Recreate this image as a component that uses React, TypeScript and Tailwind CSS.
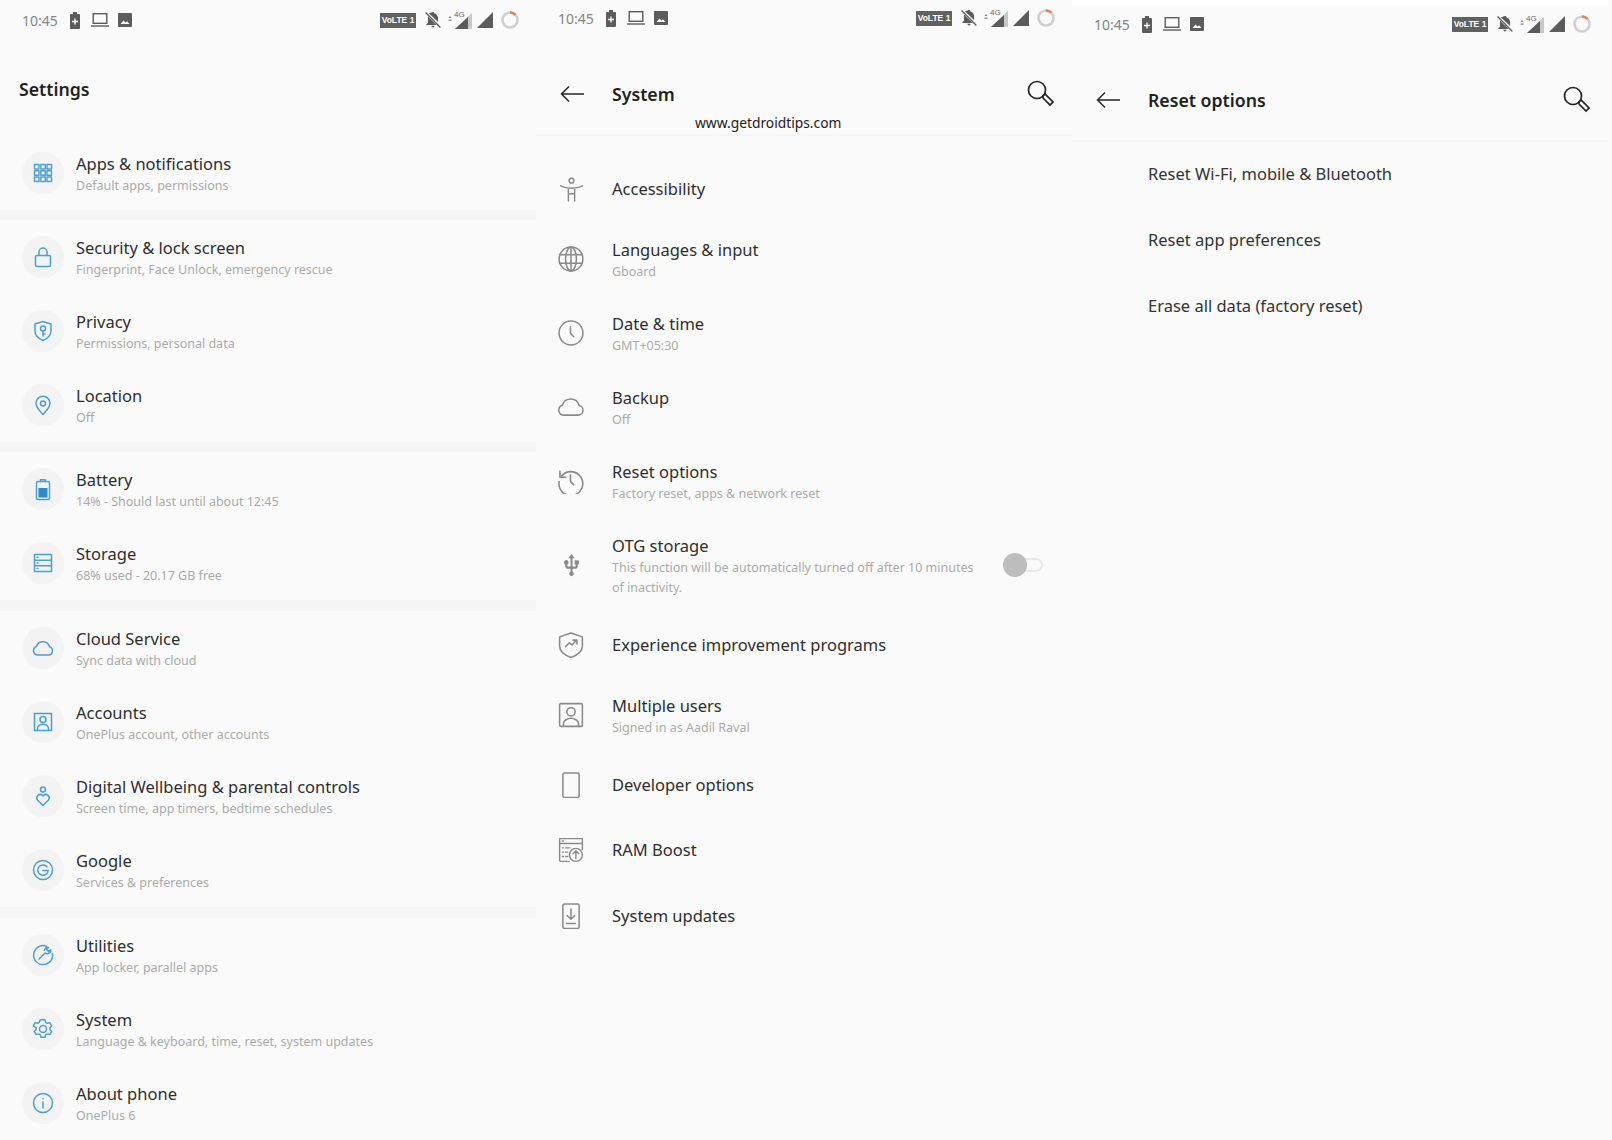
import React from "react";

const Ico = ({ size = 24, children, strokeWidth = 1.5 }: { size?: number; children: React.ReactNode; strokeWidth?: number }) => (
    <svg width={size} height={size} viewBox="0 0 24 24" fill="none" stroke="currentColor" strokeWidth={strokeWidth} strokeLinecap="round" strokeLinejoin="round">
        {children}
    </svg>
);

const gearPath = "M12 2.500l2 .4.7 2.500 1.600.9 2.500-.7 1.900 3.200-1.800 1.900v1.800l1.800 1.900-1.900 3.200-2.500-.7-1.600.9-.7 2.500h-4l-.7-2.500-1.600-.9-2.500.7-1.900-3.200 1.800-1.900v-1.800L2.300 8.800l1.900-3.200 2.500.7 1.600-.9.7-2.500z";

const blueIcons: Record<string, React.ReactNode> = {
    apps: (
        <Ico strokeWidth={1.4}>
            {[3.5, 9.8, 16].map((y) => [3.5, 9.8, 16].map((x) => <rect key={`${x}-${y}`} x={x} y={y} width="4.500" height="4.500" />))}
        </Ico>
    ),
    lock: (
        <Ico>
            <rect x="4.500" y="10.500" width="15" height="11" rx="1.500" />
            <path d="M8 10.500V7a4 4 0 0 1 8 0v3.500" />
        </Ico>
    ),
    privacy: (
        <Ico>
            <path d="M12 2.500l8 2.500v7c0 4.500-3.500 7.500-8 9.500-4.500-2-8-5-8-9.500V5z" />
            <circle cx="12" cy="9.500" r="2.500" />
            <path d="M12 12v5M12 15h2" />
        </Ico>
    ),
    pin: (
        <Ico>
            <path d="M12 21.500c-1.200-1.800-7-6.200-7-11.200a7 7 0 0 1 14 0c0 5-5.800 9.400-7 11.200z" />
            <circle cx="12" cy="10.500" r="2.500" />
        </Ico>
    ),
    battery: (
        <Ico>
            <rect x="5.500" y="4.500" width="13" height="18" rx="1.500" />
            <path d="M9.500 4.500V2.800h5v1.700" />
            <rect x="7.500" y="11" width="9" height="9.500" fill="#2e88cc" stroke="none" />
        </Ico>
    ),
    storage: (
        <Ico>
            <rect x="3.500" y="3.500" width="17" height="17" />
            <path d="M3.500 9.200h17M3.500 14.800h17M6 6.300h1M6 12h1M6 17.600h1" />
        </Ico>
    ),
    cloud: (
        <Ico>
            <path d="M6.500 19h11a4.200 4.200 0 0 0 1-8.200 6.800 6.800 0 0 0-13.100-.3A4.400 4.400 0 0 0 6.500 19z" />
        </Ico>
    ),
    account: (
        <Ico>
            <rect x="3.500" y="3.500" width="17" height="17" />
            <circle cx="12" cy="9.500" r="3" />
            <path d="M6.500 20.500v-2c0-2.500 3-4.200 5.500-4.200s5.500 1.700 5.500 4.200v2" />
        </Ico>
    ),
    wellbeing: (
        <Ico>
            <circle cx="12" cy="5.500" r="2.500" />
            <path d="M12 21.500l-5.300-5.300a3.400 3.400 0 0 1 4.800-4.800l.5.4.5-.4a3.400 3.400 0 0 1 4.800 4.800z" />
        </Ico>
    ),
    google: (
        <Ico>
            <circle cx="12" cy="12" r="9.500" />
            <path d="M16 8.800a5.200 5.200 0 1 0 1.200 3.700H12" />
        </Ico>
    ),
    utilities: (
        <Ico>
            <path d="M15.500 3.200a9.500 9.500 0 1 0 6 7.300" />
            <path d="M8 16l6-6M13.500 7.500c.3-2 2-3.300 4-3l-1.800 2 2 2 2-1.800c.3 2-1 3.700-3 4-1 .2-1.700 0-2.400-.5" />
        </Ico>
    ),
    gear: (
        <Ico>
            <path d={gearPath} />
            <circle cx="12" cy="12" r="3.500" />
        </Ico>
    ),
    info: (
        <Ico>
            <circle cx="12" cy="12" r="9.500" />
            <path d="M12 11v6M12 7.500v.2" />
        </Ico>
    ),
};

const grayIcons: Record<string, React.ReactNode> = {
    accessibility: (
        <Ico size={25} strokeWidth={1.4}>
            <circle cx="12" cy="3.500" r="2.300" />
            <path d="M1.500 8.500c3 1.500 6.500 2.200 10.500 2.200s7.500-.7 10.500-2.200M9 10.500V23M15 10.500V23M9 16h6" />
        </Ico>
    ),
    globe: (
        <Ico size={26} strokeWidth={1.4}>
            <circle cx="12" cy="12" r="11" />
            <ellipse cx="12" cy="12" rx="5" ry="11" />
            <path d="M1.500 8h21M1.500 16h21M12 1v22" />
        </Ico>
    ),
    clock: (
        <Ico size={26} strokeWidth={1.4}>
            <circle cx="12" cy="12" r="11" />
            <path d="M11.500 6.500v5.800l3 3.200" />
        </Ico>
    ),
    cloud: (
        <Ico size={26} strokeWidth={1.4}>
            <path d="M5.500 19.500h13a4.500 4.500 0 0 0 1-8.900 8 8 0 0 0-15.400-.3A4.700 4.700 0 0 0 5.500 19.500z" />
        </Ico>
    ),
    history: (
        <Ico size={26} strokeWidth={1.5}>
            <path d="M3 7.800A11 11 0 1 1 1 12.500" />
            <path d="M1.800 3v5.500h5.500M11.500 6.500v5.800l3 3.200" />
        </Ico>
    ),
    usb: (
        <svg width="25" height="25" viewBox="0 0 24 24" fill="currentColor">
            <path d="M15 7v4h1v2h-3V5h2l-3-4-3 4h2v8H8v-2.070c.7-.37 1.200-1.080 1.200-1.930 0-1.210-.99-2.200-2.200-2.200-1.210 0-2.200.99-2.200 2.200 0 .85.5 1.560 1.200 1.930V13c0 1.110.89 2 2 2h3v3.050c-.71.37-1.200 1.100-1.200 1.950 0 1.220.99 2.200 2.200 2.200 1.210 0 2.200-.98 2.200-2.200 0-.85-.49-1.580-1.200-1.950V15h3c1.110 0 2-.89 2-2v-2h1V7h-4z" />
        </svg>
    ),
    shield: (
        <Ico size={26} strokeWidth={1.4}>
            <path d="M12 1l10.500 3.500v8.500c0 5.200-4.800 8.500-10.500 10.500C6.300 21.500 1.500 18.200 1.500 13V4.500z" />
            <path d="M7 13.500l3.500-3.500 2.500 2 4-4.500M14 7.500h3.500V11" />
        </Ico>
    ),
    users: (
        <Ico size={26} strokeWidth={1.4}>
            <rect x="1.500" y="1.500" width="21" height="21" rx="1" />
            <circle cx="12" cy="9" r="3.800" />
            <path d="M5 22.500v-2.500c0-3 4-5 7-5s7 2 7 5v2.500" />
        </Ico>
    ),
    phone: (
        <Ico size={26} strokeWidth={1.4}>
            <rect x="4.500" y="1" width="15" height="22.500" rx="1.500" />
        </Ico>
    ),
    ram: (
        <Ico size={26} strokeWidth={1.3}>
            <path d="M10 22.500H2.500a1 1 0 0 1-1-1v-20h21v10" />
            <path d="M1.500 6h21M4 3.700h1M4 10h1M7 10h4M4 14h1M7 14h2M4 18h1M7 18h2" />
            <circle cx="16.500" cy="16.500" r="6" />
            <path d="M16.500 20v-7M13.800 15.500l2.700-2.700 2.700 2.700" />
        </Ico>
    ),
    update: (
        <Ico size={26} strokeWidth={1.4}>
            <rect x="4.500" y="1" width="15" height="22.500" rx="1.500" />
            <path d="M12 5.500v9M8.500 11.500l3.500 3.500 3.500-3.500M8 19h8" />
        </Ico>
    ),
};

function StatusBar() {
    return (
        <div className="flex items-center h-9 pl-[22px] pr-[17px]">
            <span className="text-[14px] w-[48px] text-[#858585]">10:45</span>
            <svg width="10" height="17" viewBox="0 0 10 17" className="mr-[11px]" fill="#5c5c5c">
                <path d="M3 0h4v2h2a1 1 0 0 1 1 1v13a1 1 0 0 1-1 1H1a1 1 0 0 1-1-1V3a1 1 0 0 1 1-1h2z" />
                <path d="M4.300 6.500h1.400v2.300H8v1.400H5.700v2.300H4.300v-2.300H2V8.800h2.300z" fill="#fafafa" />
            </svg>
            <svg width="18" height="14" viewBox="0 0 18 14" className="mr-[9px]" fill="none" stroke="#5c5c5c" strokeWidth="1.400">
                <rect x="2.200" y="0.700" width="13.600" height="9.600" />
                <path d="M0 13h18" />
            </svg>
            <svg width="14" height="14" viewBox="0 0 14 14" fill="#5c5c5c">
                <rect width="14" height="14" rx="1" />
                <path d="M2.500 11l3-3.500 2 2 1.500-1.300 2.500 2.800z" fill="#fafafa" />
            </svg>
            <div className="ml-auto flex items-center">
                <span className="w-[36px] h-[15px] mr-[8px] bg-[#616161] text-white text-[8.500px] leading-[15px] font-bold text-center whitespace-nowrap font-['Liberation_Sans',sans-serif]">VoLTE 1</span>
                <svg width="18" height="18" viewBox="0 0 17 17" className="mr-[5px]" fill="#5c5c5c">
                    <path d="M8.500 1c.7 0 1.200.5 1.200 1.200 2.400.6 3.600 2.500 3.600 5v3.300l-8.600-8.100c.6-.4 1.100-.6 1.800-.8C7.300 1.500 7.800 1 8.500 1zM3.700 5.100l8.200 8.100H1.800l1.900-2.200zM7 14h3a1.500 1.500 0 0 1-3 0z" />
                    <path d="M1.500 1.500l14 14" stroke="#5c5c5c" strokeWidth="1.300" />
                </svg>
                <div className="relative w-[25px] h-[17px] mr-[5px]">
                    <svg width="25" height="17" viewBox="0 0 25 17" className="absolute inset-0">
                        <path d="M3 4l1.500 2h-3zM1.500 7.500h3v1.200h-3z" fill="#888" />
                        <path d="M25 1v16H8z" fill="#c8c8c8" />
                        <path d="M21 5v12H8z" fill="#5c5c5c" />
                    </svg>
                    <span className="absolute left-[7px] -top-[3px] text-[8px] text-[#666] font-['Liberation_Sans',sans-serif]">4G</span>
                </div>
                <svg width="16" height="16" viewBox="0 0 16 16" className="mr-[8px]" fill="#5c5c5c">
                    <path d="M16 0v16H0z" />
                </svg>
                <svg width="18" height="18" viewBox="0 0 18 18" fill="none" strokeWidth="2.600">
                    <circle cx="9" cy="9" r="7.500" stroke="#cfcfcf" />
                    <path d="M9 1.500a7.500 7.500 0 0 1 5.500 2.400" stroke="#e8805c" />
                </svg>
            </div>
        </div>
    );
}

function TopBar({ title }: { title: string }) {
    return (
        <div className="flex items-center h-[100px] pt-[17px] border-b-2 border-[#f4f4f4] pl-6 pr-[18px]">
            <svg width="24" height="18" viewBox="0 0 24 18" fill="none" stroke="#262626" strokeWidth="1.500">
                <path d="M24 9H1.500M9 1.500L1.500 9 9 16.500" />
            </svg>
            <h1 className="ml-[28px] pt-[2px] text-[17.700px] font-semibold text-[#222]">{title}</h1>
            <svg width="27" height="27" viewBox="0 0 27 27" className="ml-auto" fill="none" stroke="#222" strokeWidth="1.700">
                <circle cx="10" cy="10" r="8.500" />
                <path d="M16 16l2-2 8 8-3 3-7-7z" />
            </svg>
        </div>
    );
}

type Row = { title: string; sub?: string };

function TextBlock({ title, sub }: Row) {
    return (
        <div className={sub ? "pt-1" : ""}>
            <div className="text-[16.500px] leading-5 text-[#2e2e2e]">{title}</div>
            {sub && <div className="mt-[2px] text-[12.500px] leading-5 text-[#ababab]">{sub}</div>}
        </div>
    );
}

function BlueRow({ icon, title, sub }: Row & { icon: string }) {
    return (
        <div className="flex items-center pl-[22px] h-[74px]">
            <div className="flex h-[42px] w-[42px] items-center justify-center rounded-full bg-[#f3f3f3] text-[#4c9fd2]">{blueIcons[icon]}</div>
            <div className="ml-[12px]">
                <TextBlock title={title} sub={sub} />
            </div>
        </div>
    );
}

const Divider = ({ h = "h-[10px]" }: { h?: string }) => <div className={`${h} bg-[#f5f5f5]`} />;

function SystemRow({ icon, title, sub, h }: Row & { icon: string; h: string }) {
    return (
        <div className={`flex items-center ${h}`}>
            <div className="flex w-[76px] justify-center pr-[6px] text-[#8a8a8a]">{grayIcons[icon]}</div>
            <TextBlock title={title} sub={sub} />
        </div>
    );
}

const systemRows = [
    { icon: "accessibility", title: "Accessibility", h: "h-[66px]" },
    { icon: "globe", title: "Languages & input", sub: "Gboard", h: "h-[74px]" },
    { icon: "clock", title: "Date & time", sub: "GMT+05:30", h: "h-[74px]" },
    { icon: "cloud", title: "Backup", sub: "Off", h: "h-[74px]" },
    { icon: "history", title: "Reset options", sub: "Factory reset, apps & network reset", h: "h-[74px]" },
];

const systemRowsBelow = [
    { icon: "shield", title: "Experience improvement programs", h: "h-[66px]" },
    { icon: "users", title: "Multiple users", sub: "Signed in as Aadil Raval", h: "h-[74px]" },
    { icon: "phone", title: "Developer options", h: "h-[65px]" },
    { icon: "ram", title: "RAM Boost", h: "h-[66px]" },
    { icon: "update", title: "System updates", h: "h-[66px]" },
];

const resetRows = ["Reset Wi-Fi, mobile & Bluetooth", "Reset app preferences", "Erase all data (factory reset)"];

export default function App() {
    return (
        <div className="grid grid-cols-[536px_536px_540px] h-[1140px] overflow-hidden bg-[#fafafa] font-['Noto_Sans',sans-serif]">
            <div>
                <div className="pt-[2px]">
                    <StatusBar />
                </div>
                <h1 className="h-[98px] pl-[19px] pt-[38px] text-[17.700px] font-semibold text-[#1f1f1f]">Settings</h1>
                <BlueRow icon="apps" title="Apps & notifications" sub="Default apps, permissions" />
                <Divider />
                <BlueRow icon="lock" title="Security & lock screen" sub="Fingerprint, Face Unlock, emergency rescue" />
                <BlueRow icon="privacy" title="Privacy" sub="Permissions, personal data" />
                <BlueRow icon="pin" title="Location" sub="Off" />
                <Divider />
                <BlueRow icon="battery" title="Battery" sub="14% - Should last until about 12:45" />
                <BlueRow icon="storage" title="Storage" sub="68% used - 20.17 GB free" />
                <Divider h="h-[11px]" />
                <BlueRow icon="cloud" title="Cloud Service" sub="Sync data with cloud" />
                <BlueRow icon="account" title="Accounts" sub="OnePlus account, other accounts" />
                <BlueRow icon="wellbeing" title="Digital Wellbeing & parental controls" sub="Screen time, app timers, bedtime schedules" />
                <BlueRow icon="google" title="Google" sub="Services & preferences" />
                <Divider h="h-[11px]" />
                <BlueRow icon="utilities" title="Utilities" sub="App locker, parallel apps" />
                <BlueRow icon="gear" title="System" sub="Language & keyboard, time, reset, system updates" />
                <BlueRow icon="info" title="About phone" sub="OnePlus 6" />
            </div>

            <div className="relative">
                <StatusBar />
                <TopBar title="System" />
                <span className="absolute left-[159px] top-[113px] text-[13.800px] leading-[20px] text-[#222]">www.getdroidtips.com</span>
                <div className="pt-[20px]">
                    {systemRows.map((r) => (
                        <SystemRow key={r.title} {...r} />
                    ))}
                    <div className="flex items-center h-[94px]">
                        <div className="flex w-[76px] justify-center pr-[6px] text-[#8a8a8a]">{grayIcons.usb}</div>
                        <div className="w-[367px]">
                            <TextBlock title="OTG storage" sub="This function will be automatically turned off after 10 minutes of inactivity." />
                        </div>
                        <div className="relative ml-[24px] h-[24px] w-[40px]">
                            <div className="absolute right-0 top-[5px] h-[14px] w-[30px] rounded-full border-2 border-[#e8e8e8]" />
                            <div className="absolute left-0 top-0 h-[24px] w-[24px] rounded-full bg-[#bdbdbd]" />
                        </div>
                    </div>
                    {systemRowsBelow.map((r) => (
                        <SystemRow key={r.title} {...r} />
                    ))}
                </div>
            </div>

            <div className="w-[536px]">
                <div className="h-[6px] bg-white" />
                <StatusBar />
                <TopBar title="Reset options" />
                {resetRows.map((t) => (
                    <div key={t} className="flex items-center h-[66px] pl-[76px] pb-[1px] text-[16.500px] text-[#333]">
                        {t}
                    </div>
                ))}
            </div>
        </div>
    );
}
